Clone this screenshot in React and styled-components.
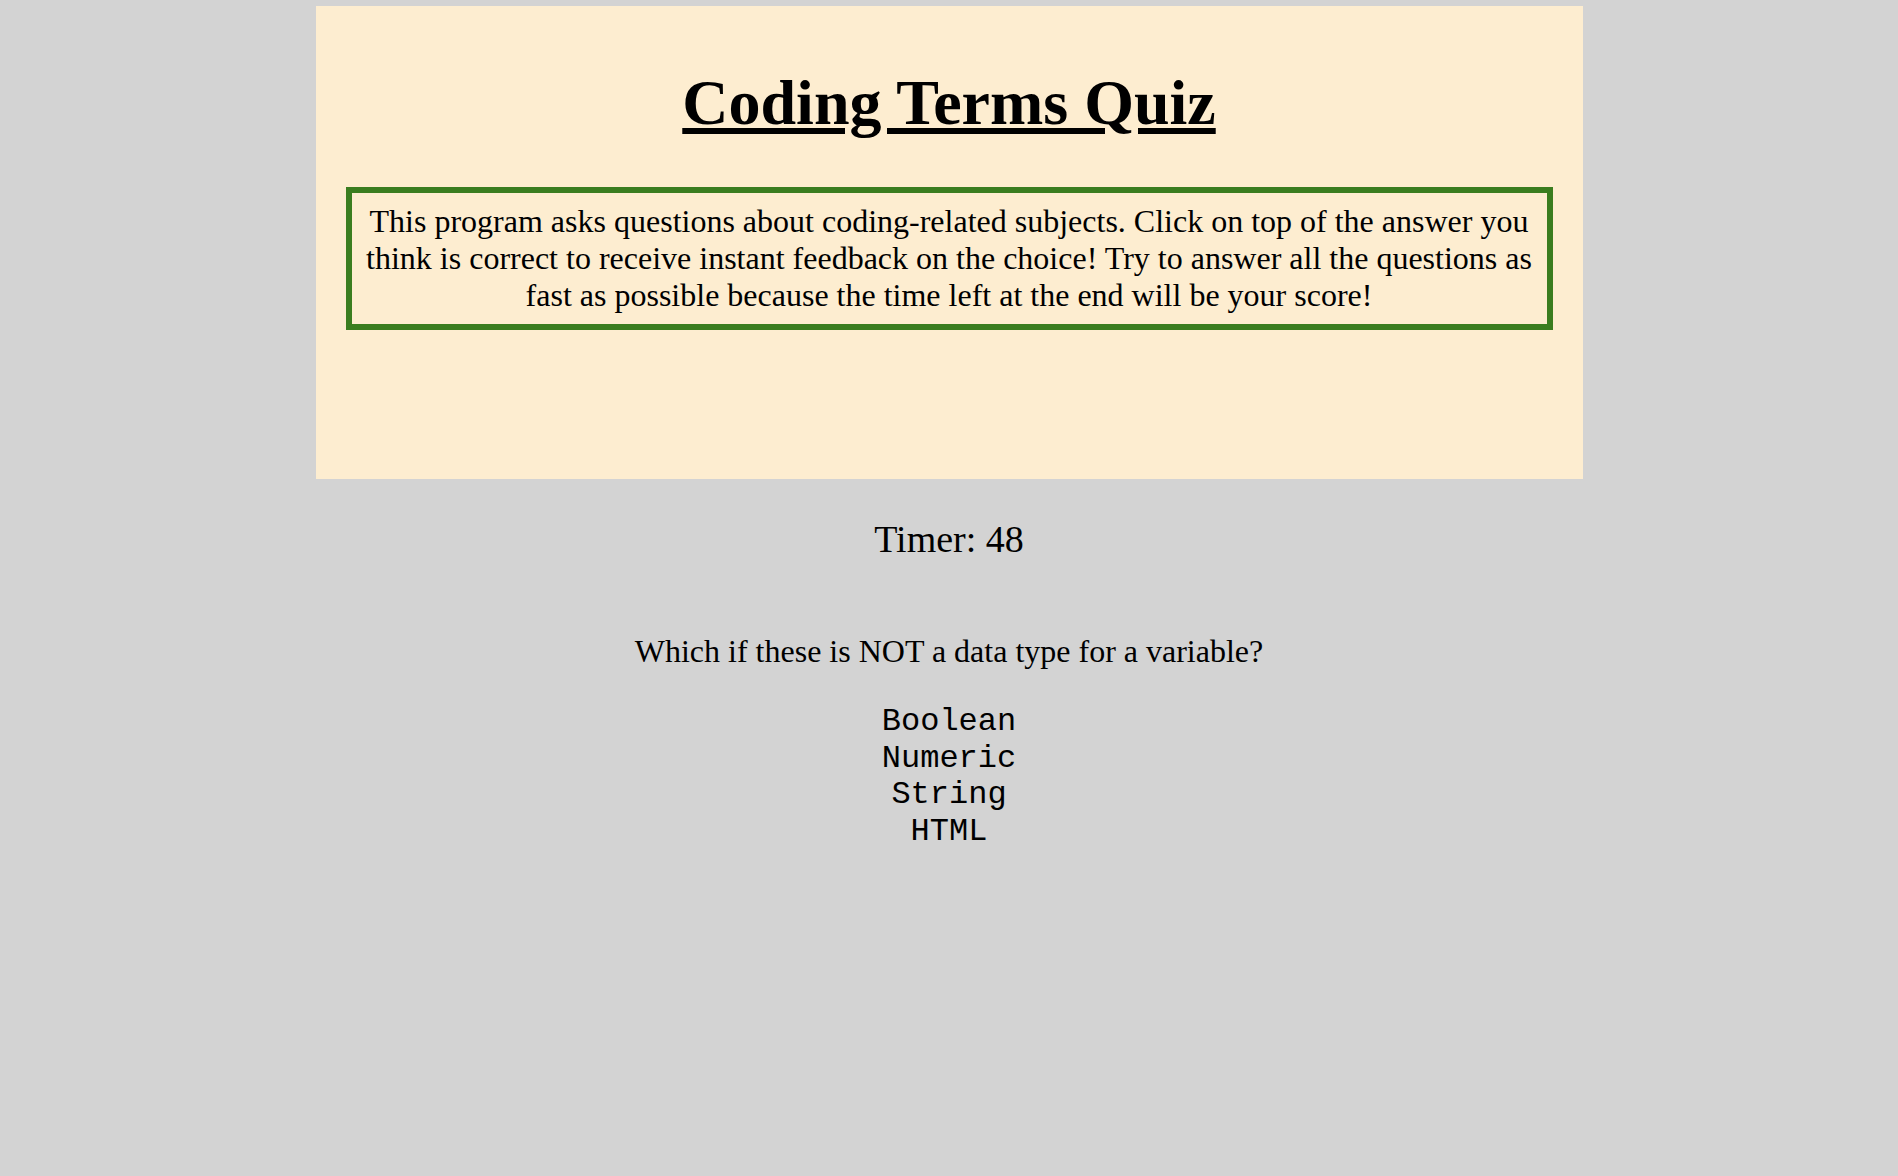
import React from 'react';
import styled, { createGlobalStyle } from 'styled-components';

const answers = ['Boolean', 'Numeric', 'String', 'HTML'];

const GlobalStyle = createGlobalStyle`
	body {
		margin: 0;
		background-color: #d3d3d3;
		font-family: "Liberation Serif", "Times New Roman", serif;
		color: #000;
	}
`;

const App = () => {
	return (
		<>
			<GlobalStyle />
			<Header>
				<Title>Coding Terms Quiz</Title>
				<Intro>
					This program asks questions about coding-related subjects. Click on top
					of the answer you think is correct to receive instant feedback on the
					choice! Try to answer all the questions as fast as possible because the
					time left at the end will be your score!
				</Intro>
			</Header>
			<Main>
				<Timer>Timer: 48</Timer>
				<Question>Which if these is NOT a data type for a variable?</Question>
				<Answers>
					{answers.map(answer => (
						<Answer key={answer}>{answer}</Answer>
					))}
				</Answers>
			</Main>
		</>
	);
};

const Header = styled.header`
	width: 1267px;
	margin: 6px auto 0;
	padding: 17px 30px 149px;
	box-sizing: border-box;
	background-color: #fdedd0;
`;

const Title = styled.h1`
	margin: 43px 0 47px;
	text-align: center;
	font-size: 64px;
	font-weight: 700;
	text-decoration: underline;
`;

const Intro = styled.p`
	margin: 0;
	padding: 10px;
	border: 6px solid #3a7d1f;
	text-align: center;
	font-size: 32px;
`;

const Main = styled.main`
	display: flex;
	flex-direction: column;
	align-items: center;
	padding-top: 38px;
`;

const Timer = styled.div`
	font-size: 38px;
`;

const Question = styled.p`
	margin: 72px 0 34px;
	font-size: 32px;
`;

const Answers = styled.div`
	display: flex;
	flex-direction: column;
	align-items: center;
`;

const Answer = styled.button`
	padding: 0;
	border: none;
	background: none;
	font-family: "Liberation Mono", "Courier New", monospace;
	font-size: 32px;
	line-height: 36.7px;
	color: #000;
	cursor: pointer;
`;

export default App;
